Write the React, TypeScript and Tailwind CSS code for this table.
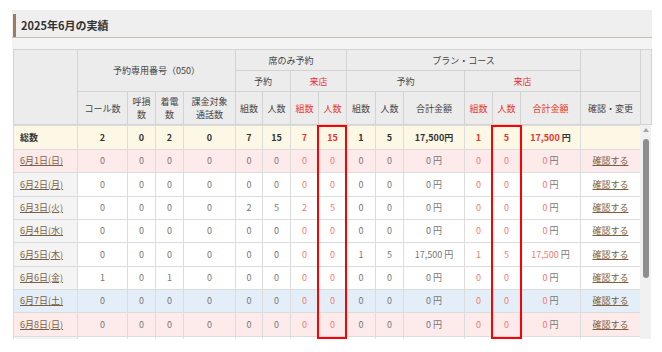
import React from 'react';

type Row = {
  label: string;
  kind: 'sun' | 'sat' | 'day';
  v: number[];
  amt: string;
  visitAmt: string;
};

const rows: Row[] = [
  { label: '6月1日(日)', kind: 'sun', v: [0, 0, 0, 0, 0, 0, 0, 0, 0, 0, 0, 0], amt: '0', visitAmt: '0' },
  { label: '6月2日(月)', kind: 'day', v: [0, 0, 0, 0, 0, 0, 0, 0, 0, 0, 0, 0], amt: '0', visitAmt: '0' },
  { label: '6月3日(火)', kind: 'day', v: [0, 0, 0, 0, 2, 5, 2, 5, 0, 0, 0, 0], amt: '0', visitAmt: '0' },
  { label: '6月4日(水)', kind: 'day', v: [0, 0, 0, 0, 0, 0, 0, 0, 0, 0, 0, 0], amt: '0', visitAmt: '0' },
  { label: '6月5日(木)', kind: 'day', v: [0, 0, 0, 0, 0, 0, 0, 0, 1, 5, 1, 5], amt: '17,500', visitAmt: '17,500' },
  { label: '6月6日(金)', kind: 'day', v: [1, 0, 1, 0, 0, 0, 0, 0, 0, 0, 0, 0], amt: '0', visitAmt: '0' },
  { label: '6月7日(土)', kind: 'sat', v: [0, 0, 0, 0, 0, 0, 0, 0, 0, 0, 0, 0], amt: '0', visitAmt: '0' },
  { label: '6月8日(日)', kind: 'sun', v: [0, 0, 0, 0, 0, 0, 0, 0, 0, 0, 0, 0], amt: '0', visitAmt: '0' },
];

const widths = [64, 50, 28, 28, 52, 27, 28, 28, 28, 29, 28, 61, 28, 28, 60, 60];

const Cols = ({ gutter }: { gutter?: boolean }) => (
  <colgroup>
    {widths.map((w, i) => (
      <col key={i} style={{ width: w }} />
    ))}
    {gutter && <col style={{ width: 11 }} />}
  </colgroup>
);

const th = 'border border-[#d3d3d3] bg-[#ececec] text-center font-normal text-[#444] p-0 leading-[13px]';
const red = 'text-[#e8342c]';

const App = () => {
  const td = 'border border-[#dcdcdc] text-center p-0 text-[#777]';
  const tdRed = 'border border-[#dcdcdc] text-center p-0 text-[#f27a76]';
  const yen = (n: string, isRed?: boolean) => (
    <>
      <span className={isRed ? 'text-[#f27a76]' : ''}>{n}</span>
      <span className="text-[#777]"> 円</span>
    </>
  );

  return (
    <div className="w-[662px] h-[352px] bg-white font-['Noto_Sans_CJK_JP',sans-serif] text-[9px]">
      <div className="ml-[12px] pt-[10px] w-[640px]">
        <div className="bg-[#f4f4f4] pb-[11px]">
          <div className="h-[28px] bg-[#efefef] border-b border-[#cbbcac] pl-[1px] pt-[4px]">
            <div className="h-[23px] border-l-[3px] border-[#9b7d5c] pl-[5px] flex items-center">
              <h1 className="text-[11px] font-bold text-[#333]">2025年6月の実績</h1>
            </div>
          </div>
        </div>

        <div className="ml-[1px] w-[638px]">
          <table className="table-fixed border-collapse w-[638px]">
            <Cols gutter />
            <thead>
              <tr className="h-[21px]">
                <th rowSpan={3} className={th}></th>
                <th rowSpan={2} colSpan={4} className={th}>予約専用番号（050）</th>
                <th colSpan={4} className={th}>席のみ予約</th>
                <th colSpan={6} className={th}>プラン・コース</th>
                <th rowSpan={2} className={th}></th>
                <th rowSpan={3} className={th}></th>
              </tr>
              <tr className="h-[21px]">
                <th colSpan={2} className={th}>予約</th>
                <th colSpan={2} className={`${th} ${red}`}>来店</th>
                <th colSpan={3} className={th}>予約</th>
                <th colSpan={3} className={`${th} ${red}`}>来店</th>
              </tr>
              <tr className="h-[33px]">
                <th className={th}>コール数</th>
                <th className={th}>呼損<br />数</th>
                <th className={th}>着電<br />数</th>
                <th className={th}>課金対象<br />通話数</th>
                <th className={th}>組数</th>
                <th className={th}>人数</th>
                <th className={`${th} ${red}`}>組数</th>
                <th className={`${th} ${red}`}>人数</th>
                <th className={th}>組数</th>
                <th className={th}>人数</th>
                <th className={th}>合計金額</th>
                <th className={`${th} ${red}`}>組数</th>
                <th className={`${th} ${red}`}>人数</th>
                <th className={`${th} ${red}`}>合計金額</th>
                <th className={th}>確認・変更</th>
              </tr>
            </thead>
          </table>

          <div className="relative flex h-[214px]">
            <div className="h-[214px] overflow-hidden w-[627px] bg-white">
              <table className="table-fixed border-collapse w-[627px]">
                <Cols />
                <tbody>
                  <tr className="h-[24px] bg-[#fdf8e6] font-bold text-[#333]">
                    <td className="border border-[#dcdcdc] pl-[6px] text-[#333]">総数</td>
                    {[2, 0, 2, 0, 7, 15].map((n, i) => (
                      <td key={i} className="border border-[#dcdcdc] text-center">{n}</td>
                    ))}
                    <td className={`border border-[#dcdcdc] text-center ${red}`}>7</td>
                    <td className={`border border-[#dcdcdc] text-center ${red}`}>15</td>
                    <td className="border border-[#dcdcdc] text-center">1</td>
                    <td className="border border-[#dcdcdc] text-center">5</td>
                    <td className="border border-[#dcdcdc] text-center">17,500円</td>
                    <td className={`border border-[#dcdcdc] text-center ${red}`}>1</td>
                    <td className={`border border-[#dcdcdc] text-center ${red}`}>5</td>
                    <td className="border border-[#dcdcdc] text-center">
                      <span className={red}>17,500</span> 円
                    </td>
                    <td className="border border-[#dcdcdc]"></td>
                  </tr>
                  {rows.map((r) => {
                    const bg = r.kind === 'sun' ? 'bg-[#fdeaea]' : r.kind === 'sat' ? 'bg-[#e4eef8]' : 'bg-white';
                    const dateBg = r.kind === 'day' ? 'bg-[#f4f4f4]' : '';
                    return (
                      <tr key={r.label} className={`h-[23.33px] ${bg}`}>
                        <td className={`border border-[#dcdcdc] pl-[6px] ${dateBg}`}>
                          <a className="text-[#7b6142] underline underline-offset-1">{r.label}</a>
                        </td>
                        {r.v.slice(0, 6).map((n, i) => (
                          <td key={i} className={td}>{n}</td>
                        ))}
                        <td className={tdRed}>{r.v[6]}</td>
                        <td className={tdRed}>{r.v[7]}</td>
                        <td className={td}>{r.v[8]}</td>
                        <td className={td}>{r.v[9]}</td>
                        <td className={td}>{yen(r.amt)}</td>
                        <td className={tdRed}>{r.v[10]}</td>
                        <td className={tdRed}>{r.v[11]}</td>
                        <td className={td}>{yen(r.visitAmt, true)}</td>
                        <td className={td}>
                          <a className="text-[#7b6142] underline underline-offset-1">確認する</a>
                        </td>
                      </tr>
                    );
                  })}
                  <tr className="h-[23.33px] bg-white">
                    {widths.map((_, i) => (
                      <td key={i} className={`border border-[#dcdcdc] ${i === 0 ? 'bg-[#f4f4f4]' : ''}`}></td>
                    ))}
                  </tr>
                </tbody>
              </table>
            </div>
            {/* scrollbar */}
            <div className="w-[11px] h-[214px] bg-[#f1f1f1] flex flex-col items-center">
              <div className="mt-[3px] w-0 h-0 border-l-[3px] border-r-[3px] border-b-[4px] border-l-transparent border-r-transparent border-b-[#a3a3a3]"></div>
              <div className="mt-[7px] w-[6px] h-[139px] rounded-full bg-[#8e8e8e]"></div>
            </div>
            <div className="absolute left-[304px] top-0 w-[30px] h-[214px] border-2 border-[#ff0000] pointer-events-none"></div>
            <div className="absolute left-[478px] top-0 w-[31px] h-[214px] border-2 border-[#ff0000] pointer-events-none"></div>
          </div>
        </div>
      </div>
    </div>
  );
};

export default App;
